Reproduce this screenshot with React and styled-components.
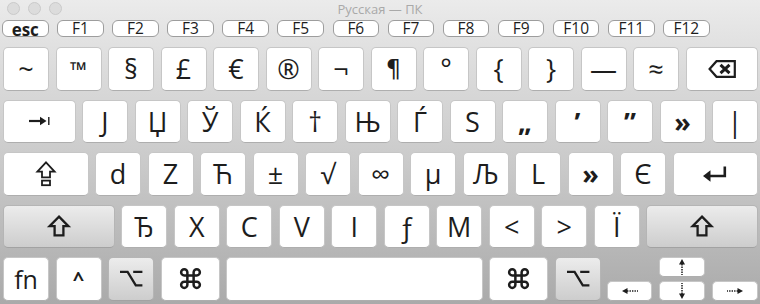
import React from "react"
import styled, { createGlobalStyle, css } from "styled-components"
import { Command } from "lucide-react"

const GlobalStyle = createGlobalStyle`
    html, body {
        margin: 0;
        padding: 0;
    }
    body {
        font-family: "Open Sans", "DejaVu Sans", sans-serif;
        color: #1d1d1d;
    }
`

const Window = styled.div`
    width: 760px;
    height: 304px;
    overflow: hidden;
    background: linear-gradient(180deg, #ebebeb 0%, #dcdcdc 22%, #c9c9c9 55%, #aaaaaa 100%);
    display: flex;
    flex-direction: column;
`

const TitleBar = styled.div`
    height: 20px;
    display: grid;
    grid-template-columns: 1fr auto 1fr;
    align-items: center;
`

const Lights = styled.div`
    display: flex;
    gap: 8px;
    padding-left: 7px;
    margin-top: -3px;
`

const Light = styled.span`
    width: 11px;
    height: 11px;
    border-radius: 50%;
    background: #dcdcdc;
    border: 1px solid #cacaca;
`

const Title = styled.div`
    font-size: 13px;
    color: #a9a9a9;
    margin-top: -3px;
`

const Keyboard = styled.div`
    display: flex;
    flex-direction: column;
    gap: 9px;
    padding: 0 2px 0 3px;
`

const FRow = styled.div`
    display: flex;
    gap: 8.6px;
    height: 17px;
    margin-left: -1px;
    margin-bottom: 1px;
`

const FKey = styled.div`
    width: 46.5px;
    flex-shrink: 0;
    box-sizing: border-box;
    background: #fff;
    border: 1px solid #9d9d9d;
    border-radius: 6px;
    display: flex;
    align-items: center;
    justify-content: center;
    font-size: ${p => (p.$esc ? "17px" : "15.5px")};
    font-weight: ${p => (p.$esc ? 700 : 400)};
    line-height: 1;
    padding-top: 1px;
`

const Row = styled.div`
    display: flex;
    gap: 6.5px;
    height: 43.5px;
`

const Key = styled.div`
    box-sizing: border-box;
    width: ${p => (p.$w ? `${p.$w}px` : "46px")};
    flex: ${p => (p.$grow ? "1 1 0" : "0 0 auto")};
    height: ${p => (p.$h ? `${p.$h}px` : "100%")};
    background: #fff;
    border: 1px solid #c6c6c6;
    border-bottom-color: #aeaeae;
    border-radius: 5px;
    display: flex;
    align-items: center;
    justify-content: center;
    font-size: ${p => p.$size || 27}px;
    font-weight: ${p => (p.$bold ? 700 : 400)};
    ${p => p.$font && css`font-family: ${p.$font};`}
    ${p => p.$grey && css`
        background: linear-gradient(180deg, #ececec 0%, #cdcdcd 100%);
        border-color: #b5b5b5;
        border-bottom-color: #a2a2a2;
    `}
`

const ArrowCluster = styled.div`
    display: flex;
    align-items: flex-end;
    gap: 7px;
    width: 151px;
    flex-shrink: 0;
`

const ArrowColumn = styled.div`
    display: flex;
    flex-direction: column;
    gap: 4.5px;
`

const Glyph = styled.svg`
    display: block;
    overflow: visible;
`

const TabIcon = () => (
    <Glyph width="21" height="10" viewBox="0 0 21 10">
        <line x1="0" y1="5" x2="13" y2="5" stroke="#1d1d1d" strokeWidth="2.2" />
        <polygon points="11,0.8 17.5,5 11,9.2" fill="#1d1d1d" />
        <line x1="19.8" y1="1" x2="19.8" y2="9" stroke="#1d1d1d" strokeWidth="1.4" />
    </Glyph>
)

const DeleteIcon = () => (
    <Glyph width="28" height="18" viewBox="0 0 28 18">
        <path d="M1.6 9 L8.5 1.2 H26.8 V16.8 H8.5 Z" fill="none" stroke="#1d1d1d" strokeWidth="2.2" strokeLinejoin="miter" />
        <path d="M12.5 4.8 L21.5 13.2 M21.5 4.8 L12.5 13.2" stroke="#1d1d1d" strokeWidth="3" />
    </Glyph>
)

const CapsIcon = () => (
    <Glyph width="20" height="26" viewBox="0 0 20 26">
        <path d="M10 1.4 L18.6 10.6 H14 V16.4 H6 V10.6 H1.4 Z" fill="none" stroke="#1d1d1d" strokeWidth="1.8" />
        <rect x="6" y="19.6" width="8" height="4.6" fill="none" stroke="#1d1d1d" strokeWidth="1.8" />
    </Glyph>
)

const ShiftIcon = () => (
    <Glyph width="22" height="22" viewBox="0 0 22 22">
        <path d="M11 1.6 L20.4 11.2 H15.4 V20.4 H6.6 V11.2 H1.6 Z" fill="none" stroke="#1d1d1d" strokeWidth="2.3" />
    </Glyph>
)

const ReturnIcon = () => (
    <Glyph width="24" height="16" viewBox="0 0 24 16">
        <path d="M21.8 0.5 V10 H6" fill="none" stroke="#1d1d1d" strokeWidth="2.6" />
        <polygon points="0,10 7.5,4.2 7.5,15.8" fill="#1d1d1d" />
    </Glyph>
)

const OptionIcon = () => (
    <Glyph width="24" height="17" viewBox="0 0 24 17">
        <path d="M1 1.8 H8.6 L16.8 15.4 H23.4 M14.2 1.8 H23.4" fill="none" stroke="#1d1d1d" strokeWidth="2.3" />
    </Glyph>
)

const DotArrow = ({ dir }) => {
    const rot = { left: 0, up: 90, right: 180, down: 270 }[dir]
    const vertical = dir === "up" || dir === "down"
    return (
        <Glyph
            width={vertical ? 8 : 16}
            height={vertical ? 16 : 8}
            viewBox={vertical ? "0 0 8 16" : "0 0 16 8"}
        >
            <g transform={vertical ? `rotate(${rot} 4 8) translate(-4 4)` : `rotate(${rot} 8 4)`}>
                <line x1="5" y1="4" x2="16" y2="4" stroke="#1d1d1d" strokeWidth="1.5" strokeDasharray="1.4 1.1" />
                <polygon points="0,4 5.5,1 5.5,7" fill="#1d1d1d" />
            </g>
        </Glyph>
    )
}

const fKeys = ["esc", "F1", "F2", "F3", "F4", "F5", "F6", "F7", "F8", "F9", "F10", "F11", "F12"]
const row1 = ["~", "™", "§", "£", "€", "®", "¬", "¶", "°", "{", "}", "—", "≈"]
const row2 = ["Ј", "Џ", "Ў", "Ќ", "†", "Њ", "Ѓ", "Ѕ", "„", "’", "”", "»", "|"]
const row3 = ["d", "Z", "Ћ", "±", "√", "∞", "µ", "Љ", "L", "»", "Є"]
const row4 = ["Ђ", "X", "C", "V", "І", "ƒ", "M", "<", ">", "Ї"]

// marks that read as heavier glyphs in the reference
const boldMarks = ["„", "’", "”", "»", "™"]

const CharKey = ({ ch }) => (
    <Key
        $bold={boldMarks.includes(ch)}
        $font={ch === "¶" ? `"DejaVu Sans", sans-serif` : undefined}
        $size={ch === "¶" ? 24 : ch === "™" ? 22 : undefined}
    >
        {ch}
    </Key>
)

function App() {
    return (
        <Window>
            <GlobalStyle />
            <TitleBar>
                <Lights>
                    <Light />
                    <Light />
                    <Light />
                </Lights>
                <Title>Русская — ПК</Title>
                <div />
            </TitleBar>
            <Keyboard>
                <FRow>
                    {fKeys.map(k => (
                        <FKey key={k} $esc={k === "esc"}>{k}</FKey>
                    ))}
                </FRow>
                <Row>
                    {row1.map((k, i) => <CharKey key={i} ch={k} />)}
                    <Key $grow><DeleteIcon /></Key>
                </Row>
                <Row>
                    <Key $grow><TabIcon /></Key>
                    {row2.map((k, i) => <CharKey key={i} ch={k} />)}
                </Row>
                <Row>
                    <Key $grow><CapsIcon /></Key>
                    {row3.map((k, i) => <CharKey key={i} ch={k} />)}
                    <Key $grow><ReturnIcon /></Key>
                </Row>
                <Row>
                    <Key $grow $grey><ShiftIcon /></Key>
                    {row4.map((k, i) => <CharKey key={i} ch={k} />)}
                    <Key $grow $grey><ShiftIcon /></Key>
                </Row>
                <Row>
                    <Key $w={46} $size={25}>fn</Key>
                    <Key $w={46} $size={20} $bold>^</Key>
                    <Key $w={46} $grey><OptionIcon /></Key>
                    <Key $w={59}><Command size={25} strokeWidth={2.4} /></Key>
                    <Key $grow />
                    <Key $w={59}><Command size={25} strokeWidth={2.4} /></Key>
                    <Key $w={46} $grey><OptionIcon /></Key>
                    <ArrowCluster>
                        <Key $w={45} $h={19.5}><DotArrow dir="left" /></Key>
                        <ArrowColumn>
                            <Key $h={19.5}><DotArrow dir="up" /></Key>
                            <Key $h={19.5}><DotArrow dir="down" /></Key>
                        </ArrowColumn>
                        <Key $h={19.5}><DotArrow dir="right" /></Key>
                    </ArrowCluster>
                </Row>
            </Keyboard>
        </Window>
    )
}

export default App
